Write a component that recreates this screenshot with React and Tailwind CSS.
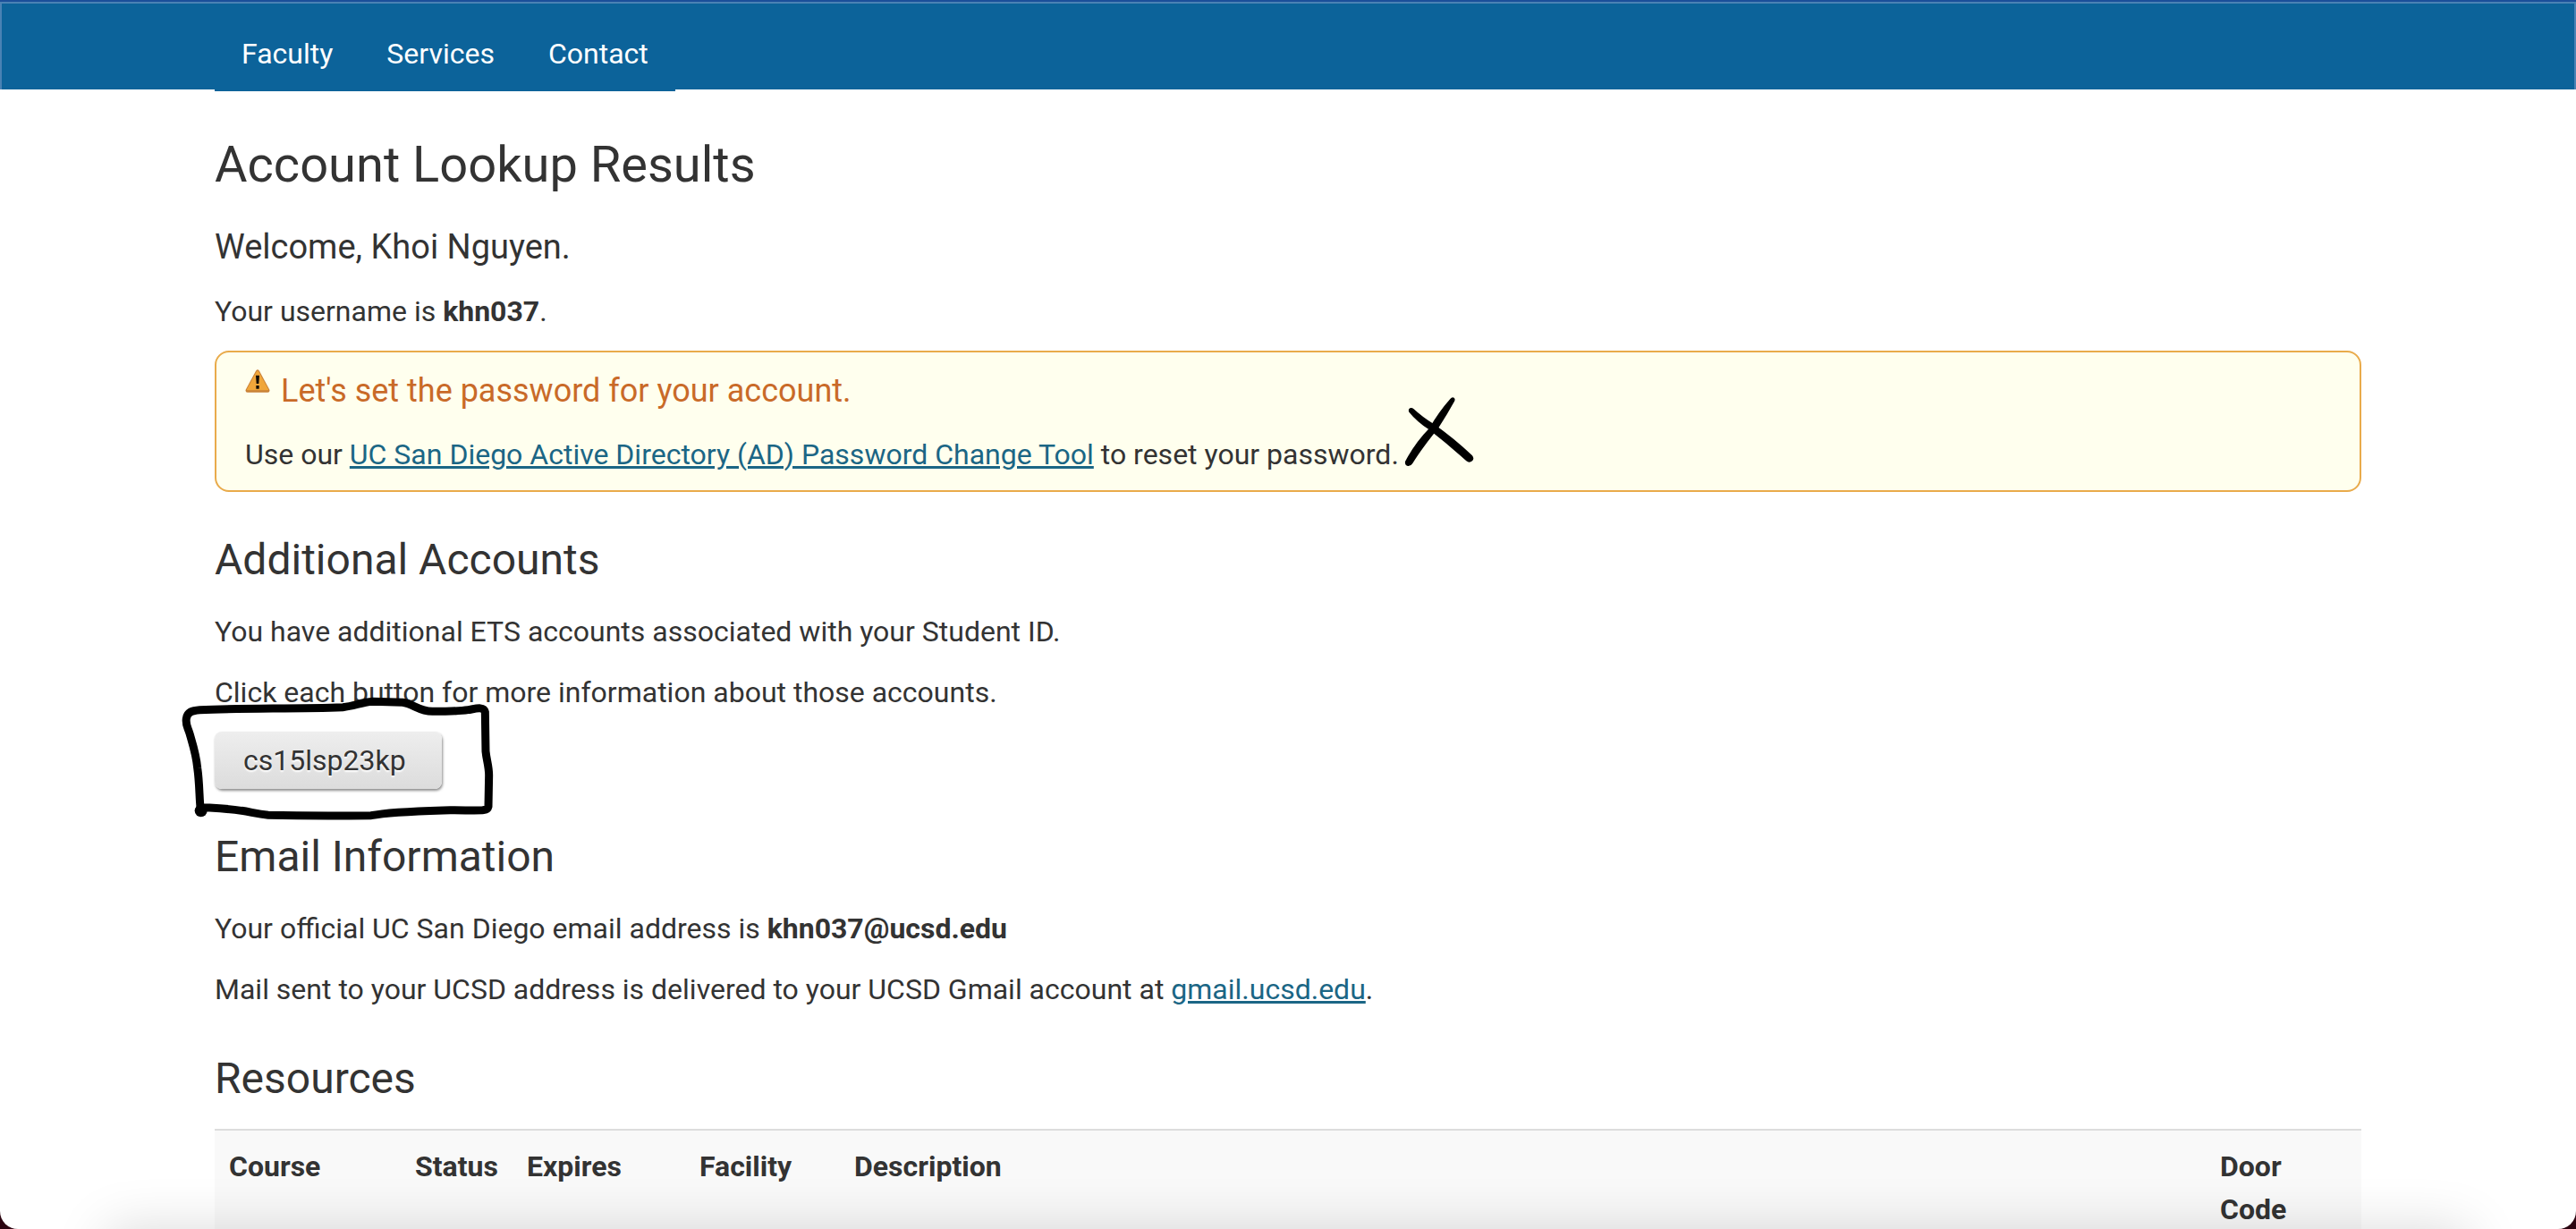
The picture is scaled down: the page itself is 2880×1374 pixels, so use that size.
function NavLink({ children }) {
  return (
    <li>
      <a href="#" className="block px-[30px] pt-8 pb-[18px] text-white">{children}</a>
    </li>
  );
}

function Heading({ children }) {
  return <h2 className="mt-12 mb-7 text-[48px] leading-[56px]">{children}</h2>;
}

function TextLink({ children }) {
  return (
    <a href="#" className="text-[#1b6685] underline decoration-[3px] underline-offset-2">{children}</a>
  );
}

function WarningIcon() {
  return (
    <svg viewBox="0 0 84 78" className="h-[26px] w-7" aria-hidden="true">
      <path d="M36 5 Q42 -3 48 5 L82 68 Q84 77 76 77 H8 Q0 77 2 68 Z" fill="#c98238" />
      <path d="M38 8 Q42 3 46 8 L78 67 Q79 70 76 70 H8 Q5 70 6 67 Z" fill="#f0a63a" />
      <path d="M36 20 H48 L46 48 H38 Z M37 54 H47 V65 H37 Z" fill="#120c04" />
    </svg>
  );
}

function CrossMark() {
  return (
    <svg viewBox="0 0 390 330" className="pointer-events-none absolute -top-[54px] left-full -ml-6 h-[110px] w-[130px]" aria-hidden="true">
      <path d="M244 48 Q250 40 257 44 Q262 49 258 56 Q235 98 204 146 Q150 212 118 264 Q112 274 102 273 Q91 270 93 258 Q125 196 174 146 Q205 92 244 48 Z" />
      <path d="M106 92 Q102 83 109 79 Q115 76 121 81 Q150 108 190 133 Q258 181 318 238 Q326 248 318 256 Q308 264 298 256 Q240 203 172 150 Q132 124 106 92 Z" />
    </svg>
  );
}

function BoxMark() {
  return (
    <svg viewBox="0 0 1140 510" className="pointer-events-none absolute -top-[58px] -left-[50px] h-[170px] w-[380px]" aria-hidden="true">
      <path
        d="M103 436 C98 400 100 350 92 295 C88 250 76 215 66 180 C58 155 52 150 55 130 C58 108 74 103 100 101 C240 94 420 98 580 92 C620 88 640 76 680 73 L780 76 C815 80 835 106 880 106 C930 106 965 106 1000 101 C1025 97 1053 88 1057 108 L1059 240 C1062 270 1070 290 1070 320 L1068 425 C1064 442 1050 438 940 437 C840 440 740 442 675 455 C560 456 440 456 330 454 C290 450 270 443 240 439 C190 431 140 430 110 428"
        fill="none" stroke="#000" strokeWidth="27" strokeLinecap="round" strokeLinejoin="round"
      />
      <circle cx="104" cy="439" r="21" />
    </svg>
  );
}

export default function App() {
  return (
    <div className="h-screen bg-[#2c0511]">
      <div className="relative h-full overflow-hidden rounded-b-[20px] bg-white font-[Roboto,sans-serif] text-[32px] leading-[48px] text-[#333]">
        <header className="h-[100px] border-t-2 border-[#1b4f9a] bg-[#0c639a] shadow-[inset_2px_2px_#4a82b4,inset_-2px_0_#4a82b4]">
          <div className="mx-auto w-5/6">
            <ul className="mt-0.5 flex w-fit bg-[#0c639a]">
              <NavLink>Faculty</NavLink>
              <NavLink>Services</NavLink>
              <NavLink>Contact</NavLink>
            </ul>
          </div>
        </header>

        <main className="mx-auto w-5/6">
          <h1 className="mt-[52px] text-[56px] leading-[64px]">Account Lookup Results</h1>
          <h3 className="mt-9 mb-6 text-[38px] leading-[48px]">Welcome, Khoi Nguyen.</h3>
          <p className="mb-5">Your username is <strong>khn037</strong>.</p>

          <section className="rounded-2xl border-2 border-[#e9ab4b] bg-[#ffffee] px-8 pt-[19px] pb-4">
            <h4 className="mb-[23px] flex gap-3 text-[36px] leading-[48px] text-[#c96a28]">
              <WarningIcon />
              Let's set the password for your account.
            </h4>
            <p className="relative w-fit">
              Use our <TextLink>UC San Diego Active Directory (AD) Password Change Tool</TextLink> to reset your password.
              <CrossMark />
            </p>
          </section>

          <Heading>Additional Accounts</Heading>
          <p className="mb-5">You have additional ETS accounts associated with your Student ID.</p>
          <p className="mb-5">Click each button for more information about those accounts.</p>
          <div className="relative w-fit">
            <button type="button" className="block rounded-lg bg-linear-to-b from-[#eee] to-[#dcdcdc] py-2 pr-10 pl-8 shadow-[1px_2px_3px_rgba(0,0,0,0.45)] text-shadow-[0_2px_2px_#fff]">
              cs15lsp23kp
            </button>
            <BoxMark />
          </div>

          <Heading>Email Information</Heading>
          <p className="mb-5">Your official UC San Diego email address is <strong>khn037@ucsd.edu</strong></p>
          <p>Mail sent to your UCSD address is delivered to your UCSD Gmail account at <TextLink>gmail.ucsd.edu</TextLink>.</p>

          <Heading>Resources</Heading>
          <table className="w-full table-fixed border-t-2 border-[#ddd] bg-[#f9f9f9] text-left">
            <thead>
              <tr className="align-top">
                <th className="w-[208px] p-4">Course</th>
                <th className="w-[125px] p-4">Status</th>
                <th className="w-[193px] p-4">Expires</th>
                <th className="w-[173px] p-4">Facility</th>
                <th className="p-4">Description</th>
                <th className="w-[174px] p-4">Door Code</th>
              </tr>
            </thead>
          </table>
        </main>

        <div className="pointer-events-none absolute inset-x-[120px] -bottom-20 h-20 shadow-[0_0_60px_rgba(0,0,0,0.15)]" />
      </div>
    </div>
  );
}
